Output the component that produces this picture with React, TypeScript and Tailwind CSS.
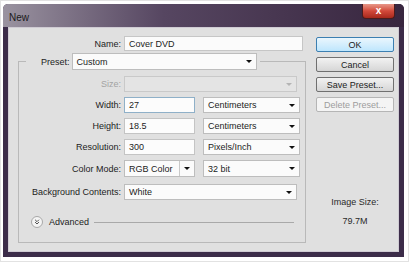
import { ChevronsDown } from "lucide-react";

const Arrow = ({ disabled = false }: { disabled?: boolean }) => (
  <span
    className={`ml-auto mr-[4px] h-0 w-0 border-x-[3px] border-t-[3px] border-x-transparent ${
      disabled ? "border-t-[#b4b4b4]" : "border-t-[#111]"
    }`}
  />
);

const Select = ({ value, w, h = 16 }: { value: string; w: string; h?: number }) => (
  <div
    className={`flex items-center border border-[#bdbdbd] bg-[#fbfbfb] pl-[4px] ${w} ${h === 17 ? "h-[17px]" : "h-[16px]"}`}
  >
    <span>{value}</span>
    <Arrow />
  </div>
);

const Input = ({ value, focus = false }: { value: string; focus?: boolean }) => (
  <div
    className={`flex h-[16px] w-[71px] items-center border bg-[#fcfcfc] pl-[4px] ${
      focus ? "border-[#8fb0c8]" : "border-[#c4c4c4]"
    }`}
  >
    {value}
  </div>
);

const Row = ({
  label,
  children,
  mt = "mt-[5px]",
  muted = false,
}: {
  label: string;
  children: React.ReactNode;
  mt?: string;
  muted?: boolean;
}) => (
  <div className={`flex items-center gap-[3px] ${mt}`}>
    <span className={`w-[102px] text-right ${muted ? "text-[#a3a3a3]" : ""}`}>{label}</span>
    {children}
  </div>
);

const Button = ({ label, primary = false, disabled = false }: { label: string; primary?: boolean; disabled?: boolean }) => (
  <div
    className={`flex h-[15px] items-center justify-center rounded-[2px] border ${
      primary
        ? "border-[#3c7fb1] bg-gradient-to-b from-[#eaf6fd] to-[#bee6fd]"
        : disabled
          ? "border-[#b5b5b5] bg-[#f4f4f4] text-[#9d9d9d]"
          : "border-[#707070] bg-gradient-to-b from-[#f2f2f2] to-[#d6d6d6]"
    }`}
  >
    {label}
  </div>
);

export default function App() {
  return (
    <div className="h-[262px] w-[409px] overflow-hidden border border-[#e2e2e2] bg-white pl-[2px] pt-[3px] font-['Liberation_Sans',Arial,sans-serif] text-[9px] leading-[12px] text-[#1c1c1c]">
      <div className="flex h-[253px] w-[401px] flex-col rounded-t-[5px] bg-[#3c2c49] px-[5px] pb-[5px]">
        {/* title bar */}
        <div className="-mx-[5px] flex h-[23px] rounded-t-[5px] bg-gradient-to-r from-[#9a93a0] via-[#564661] via-40% to-[#38263f] px-[6px]">
          <span className="mt-[8px] text-[10px] text-[#1a1a1a]">New</span>
          <div className="ml-auto mr-[3px] flex h-[15px] w-[33px] items-center justify-center rounded-b-[4px] border border-t-0 border-[#4a1c1c] bg-gradient-to-b from-[#e69688] via-[#d2483a] to-[#a8281c] text-[10px] font-bold text-white">
            x
          </div>
        </div>

        {/* body */}
        <div className="flex flex-1 border border-[#cfcbd3] bg-[#e0e0e0] pt-[8px]">
          <div className="w-[294px] pl-[9px]">
            <div className="flex items-center gap-[3px]">
              <span className="w-[103px] text-right">Name:</span>
              <div className="flex h-[15px] flex-1 items-center border border-[#c6c6c6] bg-[#fbfbfb] pl-[4px]">Cover DVD</div>
            </div>

            <fieldset className="mt-[2px] h-[190px] border border-[#b9b9b9] pr-[5px]">
              <legend className="ml-[7px] flex items-center pl-[15px] pr-[3px]">
                <span className="mr-[2px]">Preset:</span>
                <Select value="Custom" w="w-[185px]" h={17} />
              </legend>

              <Row label="Size:" mt="mt-[6px]" muted>
                <div className="flex h-[16px] w-[173px] items-center border border-[#c9c9c9] bg-[#e4e4e4]">
                  <Arrow disabled />
                </div>
              </Row>
              <Row label="Width:">
                <Input value="27" focus />
                <span className="w-[2px]" />
                <Select value="Centimeters" w="w-[97px]" />
              </Row>
              <Row label="Height:">
                <Input value="18.5" />
                <span className="w-[2px]" />
                <Select value="Centimeters" w="w-[97px]" />
              </Row>
              <Row label="Resolution:">
                <Input value="300" />
                <span className="w-[2px]" />
                <Select value="Pixels/Inch" w="w-[97px]" />
              </Row>
              <Row label="Color Mode:">
                <div className="flex h-[17px] w-[71px] items-center border border-[#bdbdbd] bg-[#fbfbfb] pl-[4px]">
                  <span>RGB Color</span>
                  <span className="ml-auto h-full border-l border-[#c9c9c9]" />
                  <span className="mx-[4px] h-0 w-0 border-x-[3px] border-t-[3px] border-x-transparent border-t-[#111]" />
                </div>
                <span className="w-[2px]" />
                <Select value="32 bit" w="w-[97px]" h={17} />
              </Row>
              <Row label="Background Contents:" mt="mt-[7px]">
                <Select value="White" w="w-[173px]" />
              </Row>

              <div className="mt-[16px] flex items-center pl-[12px] pr-[6px]">
                <span className="flex h-[12px] w-[12px] items-center justify-center rounded-full border border-[#a8a8a8] bg-[#f4f4f4]">
                  <ChevronsDown size={8} strokeWidth={2.5} className="text-[#333]" />
                </span>
                <span className="ml-[6px]">Advanced</span>
                <span className="ml-[5px] h-px flex-1 bg-[#a9a9a9]" />
              </div>
            </fieldset>
          </div>

          <div className="ml-[13px] flex w-[78px] flex-col">
            <div className="mt-[1px] flex flex-col gap-[5px]">
              <Button label="OK" primary />
              <Button label="Cancel" />
              <Button label="Save Preset..." />
              <Button label="Delete Preset..." disabled />
            </div>
            <div className="mt-[84px] flex flex-col items-center gap-[7px] text-[#2a2a2a]">
              <span>Image Size:</span>
              <span>79.7M</span>
            </div>
          </div>
        </div>
      </div>
    </div>
  );
}
